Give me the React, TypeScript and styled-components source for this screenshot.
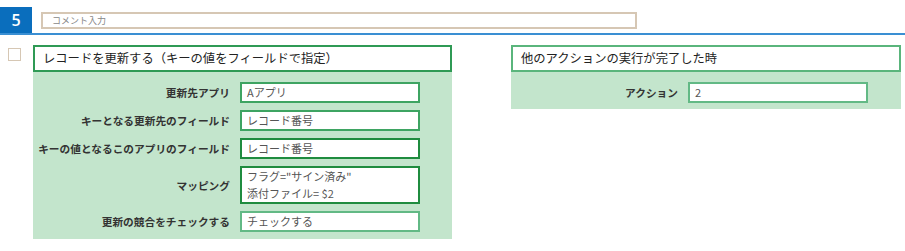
import React from 'react';
import styled, { createGlobalStyle } from 'styled-components';

const GlobalStyle = createGlobalStyle`
  body {
    margin: 0;
    background: #ffffff;
    font-family: 'Noto Sans CJK JP', 'Noto Sans', sans-serif;
    color: #333333;
  }
`;

const Page = styled.div`
  width: 905px;
  height: 251px;
  overflow: hidden;
`;

const Header = styled.div`
  display: flex;
  align-items: center;
  height: 26px;
  margin-top: 7px;
  border-bottom: 2px solid #3a8fd3;
`;

const StepBadge = styled.div`
  width: 32px;
  height: 26px;
  background: #0a6ebd;
  color: #ffffff;
  font-family: 'Open Sans', sans-serif;
  font-weight: 600;
  font-size: 16px;
  display: flex;
  align-items: center;
  justify-content: center;
`;

const CommentInput = styled.div`
  margin-left: 9px;
  width: 583px;
  height: 13px;
  border: 2px solid #d6c7b4;
  padding-left: 9px;
  font-size: 9px;
  line-height: 13px;
  color: #888888;
`;

const Content = styled.div`
  display: flex;
  align-items: flex-start;
  padding-top: 10px;
`;

const CheckBox = styled.div`
  width: 11px;
  height: 11px;
  margin: 3px 12px 0 8px;
  border: 1px solid #d6c7b4;
`;

const Panel = styled.div<{ $width: number; $left?: number }>`
  width: ${p => p.$width}px;
  margin-left: ${p => p.$left || 0}px;
  display: flex;
  flex-direction: column;
`;

const PanelTitle = styled.div<{ $light?: boolean }>`
  height: 23px;
  border: 2px solid ${p => (p.$light ? '#5ab57c' : '#2f9a55')};
  background: #ffffff;
  padding-left: 8px;
  font-size: 12.3px;
  line-height: 23px;
  color: #222222;
`;

const PanelBody = styled.div<{ $bottom: number }>`
  background: #c3e5cc;
  padding: 10px 0 ${p => p.$bottom}px;
  display: flex;
  flex-direction: column;
  gap: 7px;
`;

const Row = styled.div<{ $labelWidth: number }>`
  display: grid;
  grid-template-columns: ${p => p.$labelWidth}px 180px;
  column-gap: 10px;
  align-items: center;
`;

const Label = styled.div`
  text-align: right;
  font-size: 10.7px;
  font-weight: 700;
  color: #333333;
  white-space: nowrap;
`;

const Field = styled.div<{ $tone: 'dark' | 'mid' | 'light'; $height?: number }>`
  height: ${p => p.$height || 17}px;
  border: 2px solid
    ${p => (p.$tone === 'dark' ? '#1f8c3f' : p.$tone === 'mid' ? '#3ea462' : '#62b985')};
  background: #ffffff;
  padding: 0 5px;
  font-size: 11px;
  line-height: 17px;
  color: #555555;
  white-space: nowrap;
  display: flex;
  flex-direction: column;
  justify-content: center;
`;

const leftRows = [
  { label: '更新先アプリ', value: ['Aアプリ'], tone: 'mid' as const },
  { label: 'キーとなる更新先のフィールド', value: ['レコード番号'], tone: 'mid' as const },
  { label: 'キーの値となるこのアプリのフィールド', value: ['レコード番号'], tone: 'dark' as const },
  { label: 'マッピング', value: ['フラグ="サイン済み"', '添付ファイル= $2'], tone: 'dark' as const, height: 34 },
  { label: '更新の競合をチェックする', value: ['チェックする'], tone: 'light' as const },
];

const App: React.FC = () => {
  return (
    <Page>
      <GlobalStyle />
      <Header>
        <StepBadge>5</StepBadge>
        <CommentInput>コメント入力</CommentInput>
      </Header>
      <Content>
        <CheckBox />
        <Panel $width={419}>
          <PanelTitle>レコードを更新する（キーの値をフィールドで指定）</PanelTitle>
          <PanelBody $bottom={7}>
            {leftRows.map(r => (
              <Row key={r.label} $labelWidth={197}>
                <Label>{r.label}</Label>
                <Field $tone={r.tone} $height={r.height}>
                  {r.value.map(v => (
                    <div key={v}>{v}</div>
                  ))}
                </Field>
              </Row>
            ))}
          </PanelBody>
        </Panel>
        <Panel $width={390} $left={59}>
          <PanelTitle $light>他のアクションの実行が完了した時</PanelTitle>
          <PanelBody $bottom={6}>
            <Row $labelWidth={167}>
              <Label>アクション</Label>
              <Field $tone="light">2</Field>
            </Row>
          </PanelBody>
        </Panel>
      </Content>
    </Page>
  );
};

export default App;
